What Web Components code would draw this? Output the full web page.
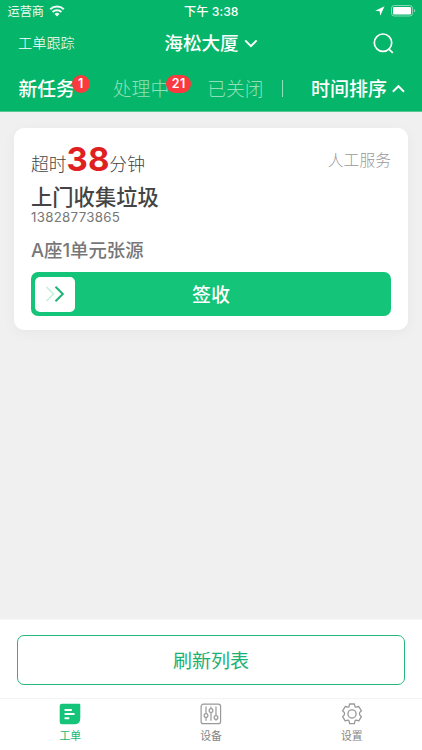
<!DOCTYPE html>
<html lang="zh-CN"><head><meta charset="utf-8"><title>工单</title>
<style>
html,body{margin:0;height:100%}
body{font-family:Inter,"Noto Sans CJK SC",sans-serif;background:#f0f0f0;overflow:hidden}
</style></head><body>
<work-app></work-app>
<script>
function define(name, html, setup){
  const t=document.createElement('template');
  t.innerHTML=html;
  customElements.define(name,class extends HTMLElement{
    constructor(){super();this.attachShadow({mode:'open'}).append(t.content.cloneNode(true));if(setup)setup(this,this.shadowRoot);}
  });
}
define('status-bar',`<style>
:host{display:grid;grid-template-columns:1fr auto 1fr;align-items:center;height:22px;padding:0 6px 0 7.5px;font-size:12.2px;color:#fff;line-height:22px}
.l,.r{display:flex;align-items:center}.l{gap:5px;opacity:.93}.r{justify-content:flex-end;gap:6px}
.l svg{margin:-2px 0 0}
.t{font-weight:500;letter-spacing:.05px;padding-top:1px;margin-left:-1px}svg{display:block}
.r svg{margin-top:-1px}
</style><div class="l"><span>运营商</span><svg width="16" height="12" viewBox="0 0 16 12" fill="none" stroke="#fff" stroke-width="2.1"><path d="M1.2 4.3a9.8 9.8 0 0 1 13.6 0M3.6 7a6.3 6.3 0 0 1 8.8 0"/><path d="M8 11.5 5.5 9a3.7 3.7 0 0 1 5 0z" fill="#fff" stroke="none"/></svg></div>
<span class="t">下午 3:38</span>
<div class="r"><svg width="10" height="10" viewBox="0 0 10 10"><path d="M9.6.3.2 4.7l4.5.6.5 4.5z" fill="#fff"/></svg>
<svg width="25" height="12" viewBox="0 0 25 12"><rect x=".5" y=".5" width="21" height="10.5" rx="2.8" fill="none" stroke="#fff" stroke-opacity=".5"/><rect x="2" y="2" width="18" height="7.5" rx="1.3" fill="#fff"/><path d="M23 4v3.6q1.2-.6 1.2-1.8T23 4" fill="#fff" opacity=".5"/></svg></div>`);

define('title-bar',`<style>
:host{display:grid;grid-template-columns:1fr auto 1fr;align-items:center;height:43px;padding:0 28px 0 18px;color:#fff}
.l{font-size:14.2px;font-weight:300;padding-bottom:3px}.t{display:flex;align-items:center;gap:6px;font-size:18.6px;font-weight:500;line-height:43px;margin-left:10px}
svg{display:block}.t svg{margin-left:-1px}.s{justify-self:end}
</style><span class="l"><slot name="action"></slot></span>
<span class="t"><slot></slot><svg width="14" height="9" viewBox="0 0 14 9" fill="none" stroke="#fff" stroke-width="2"><path d="m1.2 1.4 5.7 5.7 5.7-5.7"/></svg></span>
<svg class="s" width="21" height="21" viewBox="0 0 21 21" fill="none" stroke="#fff" stroke-width="1.7"><circle cx="10" cy="9.7" r="8.7"/><path d="m15.6 15.8 4.2 4.1"/></svg>`);

define('filter-tab',`<style>
:host{display:block;position:relative;font-size:18.8px;line-height:28px;font-weight:300;color:#8fe0ba;white-space:nowrap}
:host([active]){color:#fff;font-weight:500}
.b{position:absolute;left:calc(100% - 3px);top:-1px;box-sizing:border-box;min-width:18px;height:18px;border-radius:9px;padding:0 4px;background:#fa3a3f;color:#fff;font:600 12.5px/18px Inter,sans-serif;text-align:center;letter-spacing:.3px}
.b.wide{min-width:25px}
.b[hidden]{display:none}
</style><slot></slot><span class="b" hidden></span>`,(h,r)=>{const n=h.getAttribute('badge');if(n){const b=r.querySelector('.b');b.hidden=false;b.textContent=n;b.classList.toggle('wide',n.length>1);}});

define('filter-bar',`<style>
:host{display:flex;align-items:center;height:46px;padding:4px 17px 0 18.5px;color:#fff;box-sizing:border-box}
.g{display:flex;gap:38px}.d{width:1px;height:17px;background:#8fe0ba;margin:-3px 0 0 18px}
.s{margin-left:auto;display:flex;align-items:center;gap:5px;font-size:19px;font-weight:500;line-height:28px}
.s svg{margin-top:-4px}
</style><div class="g"><filter-tab active badge="1">新任务</filter-tab><filter-tab badge="21">处理中</filter-tab><filter-tab>已关闭</filter-tab></div><i class="d"></i>
<div class="s"><span>时间排序</span><svg width="13" height="9" viewBox="0 0 13 9" fill="none" stroke="#fff" stroke-width="1.9"><path d="m.8 7.7 5.6-5.5L12 7.7"/></svg></div>`);

define('slide-button',`<style>
:host{display:grid;grid-template-columns:39.5px 1fr 39.5px;align-items:center;box-sizing:border-box;height:44px;padding:0 4px;border-radius:7px;background:#14c478;color:#fff;font-size:19px;font-weight:500;line-height:44px;text-align:center}
.k{display:flex;align-items:center;justify-content:center;height:35px;background:#fff;border-radius:5px}
.t{padding-top:2px;height:42px}
</style><span class="k"><svg width="20" height="18" viewBox="0 0 20 18" fill="none" stroke-width="2"><path d="m1.5 2 7 7-7 7" stroke="#c4efdc" stroke-width="1.6"/><path d="m10.5 1.7 7.3 7.3-7.3 7.3" stroke="#1db574"/></svg></span><span class="t"><slot></slot></span>`);

define('task-card',`<style>
:host{display:flex;flex-direction:column;box-sizing:border-box;height:202px;margin:16px 14px 0;padding:14px 17px;border-radius:10px;background:#fff;box-shadow:0 3px 14px rgba(0,0,0,.04);color:#444}
.top{display:flex;justify-content:space-between;height:38px}
.due{display:flex;align-items:baseline;font-size:17.8px;font-weight:300;line-height:38px;white-space:nowrap;padding-top:2px}
.due b{color:#e02020;font-size:33px;font-weight:700;line-height:30px}
.kind{font-size:15.8px;font-weight:300;line-height:37px;color:#999}
.name{font-size:21.3px;font-weight:500;line-height:30px;margin-top:2px}
.phone{font-size:13.3px;line-height:16px;letter-spacing:.28px;color:#777;margin-top:-3px}
.addr{font-size:18.4px;font-weight:500;line-height:24px;color:#777;margin-top:13px}
slide-button{margin-top:auto}
</style><div class="top"><div class="due"><span>超时</span><b>38</b><span>分钟</span></div><span class="kind">人工服务</span></div>
<div class="name">上门收集垃圾</div><div class="phone">13828773865</div><div class="addr">A座1单元张源</div><slide-button>签收</slide-button>`);

define('refresh-panel',`<style>
:host{display:block;box-sizing:border-box;height:79px;padding:15px 17px 0;background:#fff;border-top:1px solid #f7f7f7}
.b{box-sizing:border-box;height:50px;border:1px solid #24b67a;border-radius:7px;text-align:center;line-height:51px;font-size:19px;font-weight:400;color:#19b273}
</style><div class="b"><slot></slot></div>`);

define('tab-item',`<style>
:host{display:flex;flex:1;flex-direction:column;align-items:center;font-size:10.8px;line-height:16px;color:#858585}
:host([active]){color:#14b873}.i{height:22px;margin-top:4px;margin-bottom:4px}
</style><span class="i"><slot name="icon"></slot></span><slot></slot>`);
define('tab-bar',`<style>
:host{display:flex;height:52px;box-sizing:border-box;border-top:1px solid #f3f3f3;background:#fff}svg{display:block}
</style>
<tab-item active><svg slot="icon" width="22" height="22" viewBox="0 0 22 22"><path d="M3 .8h17.2q1.1 0 1.1 1.1V15q0 6.3-6 6.3H3q-2.3 0-2.3-2.3V3.1Q.7.8 3 .8" fill="#14c478"/><path d="M6.3 6.9h5.8M6.3 11.1h8.5M6.3 15.3h3.2" stroke="#fff" stroke-width="2" stroke-linecap="round"/></svg>工单</tab-item>
<tab-item><svg slot="icon" width="22" height="22" viewBox="0 0 22 22" fill="none" stroke="#999" stroke-width="1.2"><rect x="1.1" y="1.2" width="19.5" height="19.5" rx="2.3"/><path d="M6 3.5v7M6 14.6v3.2M11 3.5v2.2M11 9.6v8.2M16 3.5v9M16 16.5v1.3"/><circle cx="6" cy="12.5" r="1.9"/><circle cx="11" cy="7.6" r="1.9"/><circle cx="16" cy="14.5" r="1.9"/></svg>设备</tab-item>
<tab-item><svg slot="icon" width="22" height="22" viewBox="0 0 22 22" fill="none" stroke="#999" stroke-width="1.3" stroke-linejoin="round"><path d="M8.6 1h4.8l.5 2.3q.2.8 1 .9l2.9-.7 2.6 4.3-1.6 1.6q-.7 1.3 0 2.6l1.6 1.6-2.6 4.3-2.9-.7q-.8.1-1 .9l-.5 2.6H8.6l-.5-2.6q-.2-.8-1-.9l-2.9.7-2.6-4.3 1.6-1.6q.7-1.3 0-2.6L1.6 7.8l2.6-4.3 2.9.7q.8-.1 1-.9z"/><circle cx="11" cy="10.9" r="4.1"/></svg>设置</tab-item>`);

define('work-app',`<style>
:host{display:flex;flex-direction:column;width:422px;height:750px;background:#f0f0f0}
header{background:#05b569;height:111px;border-bottom:1px solid #58c891}main{flex:1}
</style><header><status-bar></status-bar><title-bar><span slot="action">工单跟踪</span>海松大厦</title-bar><filter-bar></filter-bar></header>
<main><task-card></task-card></main><refresh-panel>刷新列表</refresh-panel><tab-bar></tab-bar>`);
</script></body></html>
